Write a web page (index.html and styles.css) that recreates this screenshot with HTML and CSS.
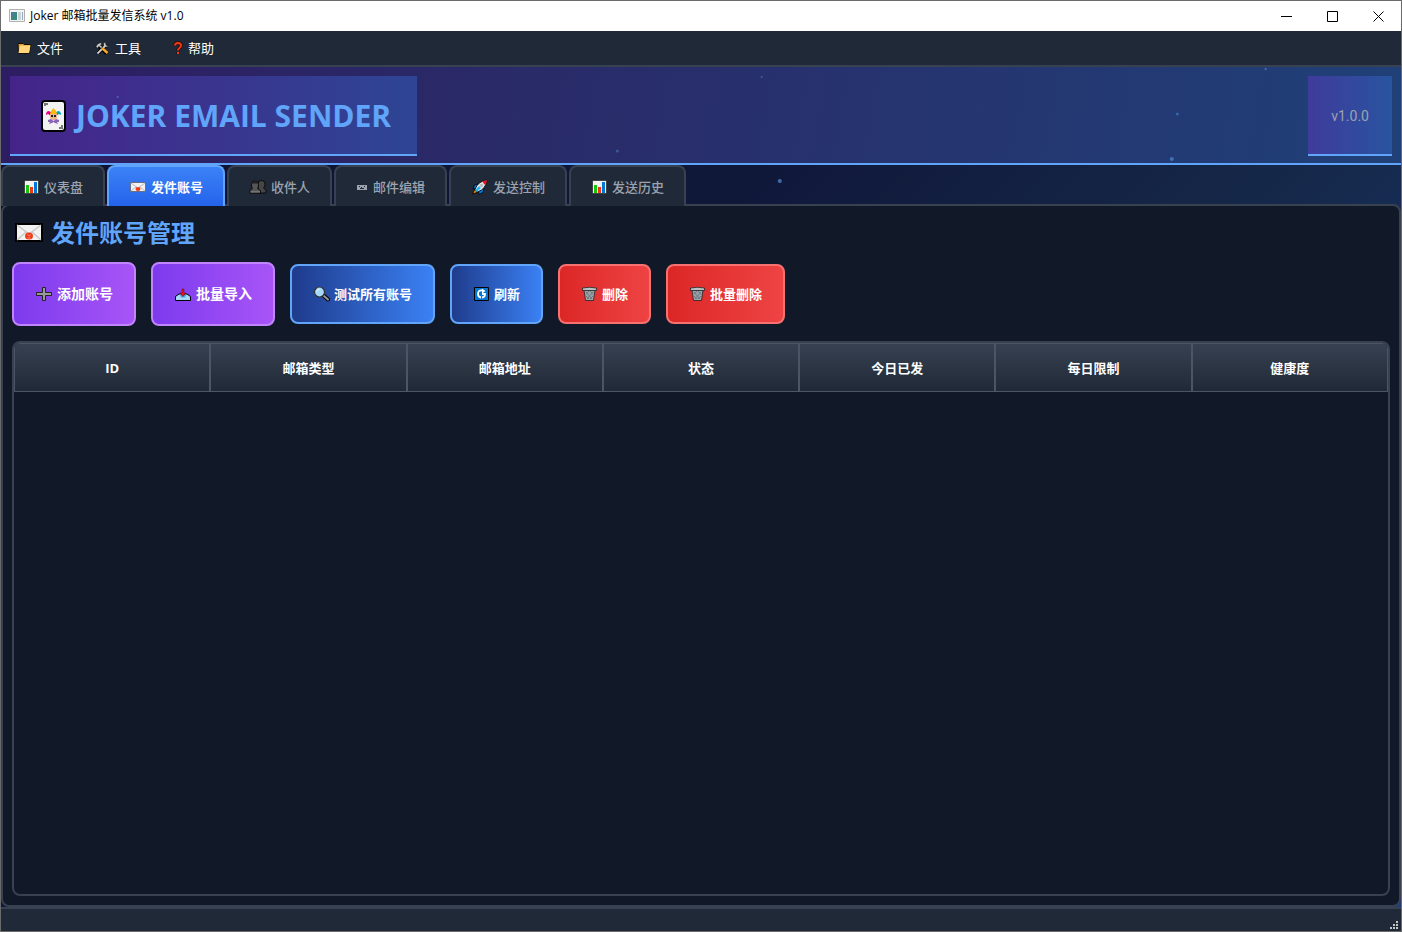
FILE: index.html
```html
<!doctype html>
<html lang="zh-CN">

<head>
  <meta charset="UTF-8" />
  <meta name="viewport" content="width=device-width, initial-scale=1.0" />
  <title>Joker 邮箱批量发信系统 v1.0</title>
  <link rel="stylesheet" href="styles.css">
</head>

<body>
  <!-- Shared icons -->
  <svg class="icon-defs" aria-hidden="true">
    <symbol id="icon-chart" viewBox="0 0 17 16">
      <path d="M1.500 1.500h14v13h-14z" fill="#f3f3f3" stroke="#111" stroke-width=".6" />
      <path d="M3 6h3v8H3z" fill="#16c60c" />
      <path d="M7 8h3v6H7z" fill="#f03a17" />
      <path d="M11 3h3v11h-3z" fill="#0078d7" />
    </symbol>
    <symbol id="icon-trash" viewBox="0 0 17 16">
      <path d="M3 4h11l-1.500 10.500h-8z" fill="#9aa5ab" stroke="#222" stroke-width=".8" />
      <path d="M5 6l6 7M9 5l3 3.500M5 10l3 3M12 6l-6 7M8 5L5 8.500M12 10l-3 3" stroke="#5d676d" stroke-width=".7" />
      <path d="M1.500 2Q8.500.5 15.500 2v2.500h-14z" fill="#b8c1c6" stroke="#222" stroke-width=".8" />
    </symbol>
  </svg>

  <div class="window">
    <header class="title-bar">
      <svg class="app-icon" viewBox="0 0 16 14" aria-hidden="true">
        <path d="M.5.5h15v12H.5z" fill="#f4f4f4" stroke="#b0b0b0" />
        <path d="M2 3h6v8H2z" fill="#3d8780" />
        <path d="M2 3h3v4H2z" fill="#4d79a8" />
        <path d="M9 3h3v8H9z" fill="#c9d2d8" />
        <path d="M13 3h1v8h-1z" fill="#9caab3" />
      </svg>
      <span class="window-title">Joker 邮箱批量发信系统 v1.0</span>
      <div class="window-controls">
        <button type="button" aria-label="最小化">
          <svg viewBox="0 0 11 11"><path d="M0 5.500h11" /></svg>
        </button>
        <button type="button" aria-label="最大化">
          <svg viewBox="0 0 11 11"><path d="M.5.5h10v10H.5z" /></svg>
        </button>
        <button type="button" aria-label="关闭">
          <svg viewBox="0 0 11 11"><path d="M.5.5l10 10M10.500.5l-10 10" /></svg>
        </button>
      </div>
    </header>

    <nav class="menu-bar">
      <button type="button">
        <svg class="icon-sm" viewBox="0 0 15 14" aria-hidden="true">
          <path d="M1 2.500h5l1 1h7L12.500 12.500h-11z" fill="#dfa036" stroke="#16110a" />
          <path d="M3 4.500h10.500l-1.500 7.500H1.500z" fill="#ffd679" />
        </svg>
        文件
      </button>
      <button type="button">
        <svg class="icon-sm" viewBox="0 0 15 14" aria-hidden="true">
          <path d="M3 12L11 4" stroke="#000" stroke-width="3.500" />
          <path d="M4 5l8 7.500" stroke="#000" stroke-width="4" />
          <path d="M9 1.500a3 3 0 0 0 1 4 3 3 0 0 0 4-1l-2 .5-1.500-1.500L11 1z" fill="#ddd" stroke="#000" stroke-width=".6" />
          <path d="M2.500 12.500L11 4" stroke="#ccc" stroke-width="1.800" />
          <path d="M7 7l5.500 5" stroke="#f7a62c" stroke-width="2.500" />
          <path d="M1 5.500Q2 2 6 1.500L7 3 5.500 4l2 2-1.500 1.500-2-2-2 2z" fill="#c5c9cc" stroke="#000" stroke-width=".6" />
        </svg>
        工具
      </button>
      <button type="button">
        <svg class="icon-q" viewBox="0 0 10 14" aria-hidden="true">
          <path d="M2 4.500Q2 2 5 2T8 4.500Q8 6 6.500 7T5 9.500M5 11v2" fill="none" stroke="#2b0904" stroke-width="3.500" />
          <path d="M2 4.500Q2 2 5 2T8 4.500Q8 6 6.500 7T5 9.500M5 11v2" fill="none" stroke="#f03a17" stroke-width="2" />
        </svg>
        帮助
      </button>
    </nav>

    <section class="banner">
      <h1 class="brand">
        <svg viewBox="0 0 28 34" aria-hidden="true">
          <rect x="2" y="2" width="23" height="30" rx="3" fill="#f2f2f2" stroke="#000" stroke-width="2" />
          <path d="M4 7V4h4v2H6v1zM23 26v4h-4v-2h2v-2z" fill="#777" />
          <path d="M6 16q0-4 3-4l3 2-1 3-3-2z" fill="#e3008c" />
          <path d="M21 16q0-4-3-4l-3 2 1 3 3-2z" fill="#00a5c8" />
          <path d="M10 15l1-3 2.500-3 2.500 3 1 3z" fill="#ffb900" />
          <path d="M10 15h7v4l-2 2h-3l-2-2z" fill="#e9b48e" />
          <path d="M11 16h2v2h-2zM14 16h2v2h-2z" fill="#222" />
          <path d="M8 21l3-1 2.500 2 2.500-2 3 1v2h-2l1 2-3-1-1.500-1-1.500 1-3 1 1-2H8z" fill="#8764b8" />
        </svg>
        JOKER EMAIL SENDER
      </h1>
      <span class="version">v1.0.0</span>
    </section>

    <div class="tab-bar" role="tablist">
      <button type="button" class="tab" role="tab">
        <svg class="icon" aria-hidden="true"><use href="#icon-chart" /></svg>仪表盘
      </button>
      <button type="button" class="tab active" role="tab" aria-selected="true">
        <svg class="icon-wide" viewBox="0 0 18 16" aria-hidden="true">
          <path d="M1.500 3.500h15v9h-15z" fill="#f2f2f2" stroke="#5a6270" stroke-width=".8" />
          <path d="M2 4l7 5 7-5M2 12l5-4M16 12l-5-4" fill="none" stroke="#bcbcbc" />
          <ellipse cx="9" cy="10" rx="2.500" ry="2" fill="#f03a17" />
        </svg>发件账号
      </button>
      <button type="button" class="tab" role="tab">
        <svg class="icon-wide" viewBox="0 0 18 16" aria-hidden="true">
          <path d="M9 5a3.500 3.500 0 0 1 7 0q0 3-1.500 4l2.500 2v3H9z" fill="#464646" stroke="#000" stroke-width=".8" />
          <path d="M2.500 5.500a3.500 3.500 0 0 1 7 0q0 3-1 4l3 2V14H1v-2.500l2.500-2q-1-1-1-4z" fill="#555" stroke="#000" stroke-width=".8" />
          <path d="M3 4.500Q4 2 6 2t3 2.500z" fill="#222" />
          <path d="M1.500 12.800h9.500" stroke="#777" stroke-width="1.500" />
        </svg>收件人
      </button>
      <button type="button" class="tab" role="tab">
        <svg class="icon-narrow" viewBox="0 0 13 16" aria-hidden="true">
          <path d="M1 6h10v5H1z" fill="#9ca3af" />
          <path d="M3 7h1v1H3zM8 7h1v1H8zM5 8h1v1H5zM4 9h4v1H4z" fill="#1f2937" />
        </svg>邮件编辑
      </button>
      <button type="button" class="tab" role="tab">
        <svg class="icon-wide" viewBox="0 0 18 16" aria-hidden="true">
          <path d="M4 10l-2.500 5L6 13.500z" fill="#ff8c00" stroke="#000" stroke-width=".8" />
          <path d="M7 5L3.500 6 2 10l4-1zM13 9.500l-1 4-4 2L7.500 11z" fill="#0078d7" stroke="#000" stroke-width=".8" />
          <path d="M4 10.500Q7 2 16 1q-1 9-9.500 12z" fill="#e6e6e6" stroke="#000" stroke-width=".8" />
          <path d="M11 2.500L16 1l-1.500 5.500z" fill="#e81224" />
          <circle cx="10.500" cy="6.500" r="1.800" fill="#b5bdc4" />
          <path d="M5 12l4-4" stroke="#29b6f0" stroke-width="2.500" />
        </svg>发送控制
      </button>
      <button type="button" class="tab" role="tab">
        <svg class="icon" aria-hidden="true"><use href="#icon-chart" /></svg>发送历史
      </button>
    </div>

    <main class="pane" role="tabpanel">
      <h2 class="page-title">
        <svg viewBox="0 0 28 20" aria-hidden="true">
          <path d="M1 1h26v17H1z" fill="#f2f2f2" stroke="#000" stroke-width="2" />
          <path d="M2 2l12 9L26 2M2 17l9-8M26 17l-9-8" fill="none" stroke="#c4c4c4" stroke-width="1.200" />
          <ellipse cx="14" cy="13" rx="4" ry="3.500" fill="#f03a17" />
          <path d="M12 11.500l2 1.500 2-1.500M12.500 15h3" fill="none" stroke="#ff9c87" stroke-width=".8" />
        </svg>
        发件账号管理
      </h2>

      <div class="toolbar">
        <button type="button" class="btn btn-accent">
          <svg class="icon-wide" viewBox="0 0 18 16" aria-hidden="true">
            <path d="M7.500 1.500h3v5h6v3h-6v5h-3v-5h-6v-3h6z" fill="#999" stroke="#222" />
          </svg>添加账号
        </button>
        <button type="button" class="btn btn-accent">
          <svg class="icon-wide" viewBox="0 0 18 16" aria-hidden="true">
            <path d="M1.500 10.500L5 8h8l3.500 2.500v4h-15z" fill="#a6d8f7" stroke="#000" />
            <path d="M6 9h6l-1 2.500H7z" fill="#4ba7e0" />
            <path d="M8 3h2v4h2l-3 3.500L6 7h2z" fill="#e81224" stroke="#501010" stroke-width=".5" />
          </svg>批量导入
        </button>
        <button type="button" class="btn btn-primary">
          <svg class="icon" viewBox="0 0 17 16" aria-hidden="true">
            <path d="M10 9l5 4.500" stroke="#000" stroke-width="4" stroke-linecap="round" />
            <path d="M11 10l4 3.500" stroke="#999" stroke-width="2" stroke-linecap="round" />
            <circle cx="6.500" cy="6" r="5" fill="#a6d8f7" stroke="#333" stroke-width="1.200" />
            <path d="M3.500 5.500q1-2.500 3-2.500" fill="none" stroke="#eefaff" />
          </svg>测试所有账号
        </button>
        <button type="button" class="btn btn-primary">
          <svg class="icon" viewBox="0 0 17 16" aria-hidden="true">
            <path d="M1.500 1.500h14v13h-14z" fill="#0078d7" stroke="#000" />
            <path d="M9 4.500Q5 4 5 8q0 3 3 3.500M9 11.500q3 0 3-3.500H9" fill="none" stroke="#fff" stroke-width="1.800" />
            <path d="M9 2.500L12.500 5 9 7.500z" fill="#fff" />
          </svg>刷新
        </button>
        <button type="button" class="btn btn-danger">
          <svg class="icon" aria-hidden="true"><use href="#icon-trash" /></svg>删除
        </button>
        <button type="button" class="btn btn-danger">
          <svg class="icon" aria-hidden="true"><use href="#icon-trash" /></svg>批量删除
        </button>
      </div>

      <div class="table-frame">
        <table class="accounts">
          <thead>
            <tr>
              <th scope="col">ID</th>
              <th scope="col">邮箱类型</th>
              <th scope="col">邮箱地址</th>
              <th scope="col">状态</th>
              <th scope="col">今日已发</th>
              <th scope="col">每日限制</th>
              <th scope="col">健康度</th>
            </tr>
          </thead>
          <tbody></tbody>
        </table>
      </div>
    </main>

    <footer class="status-bar">
      <svg viewBox="0 0 8 8" aria-hidden="true">
        <path d="M6 0h2v2H6zM3 3h2v2H3zM6 3h2v2H6zM0 6h2v2H0zM3 6h2v2H3zM6 6h2v2H6z" fill="#c4c4c4" />
      </svg>
    </footer>

    <!-- Floating particles -->
    <svg class="particles" aria-hidden="true">
      <g fill="#60a5fa">
        <circle cx="8.400%" cy="97" r="1" opacity=".5" />
        <circle cx="44.100%" cy="151" r="1.500" opacity=".35" />
        <circle cx="54.400%" cy="77" r="1" opacity=".4" />
        <circle cx="55.700%" cy="181" r="2" opacity=".6" />
        <circle cx="83.700%" cy="159" r="2" opacity=".5" />
        <circle cx="84.100%" cy="114" r="1.500" opacity=".4" />
        <circle cx="90.400%" cy="69" r="1" opacity=".6" />
      </g>
    </svg>
  </div>
</body>

</html>
```
FILE: styles.css
```css
* {
  box-sizing: border-box;
}

body {
  margin: 0;
  font-family: "Open Sans", "Noto Sans CJK SC", sans-serif;
  font-size: 13px;
  line-height: 20px;
  color: #ffffff;
  background-color: #111827;
}

button {
  margin: 0;
  padding: 0;
  border: none;
  background: none;
  color: inherit;
  font: inherit;
}

svg {
  display: block;
  flex: none;
}

.icon-defs {
  position: absolute;
  width: 0;
  height: 0;
}

.window {
  position: relative;
  display: flex;
  flex-direction: column;
  min-height: 100vh;
  border: 1px solid #6b6b6b;
  background: linear-gradient(135deg, #0f0f2a, #10183a 40%, #152646 60%, #1c407c);
}

.icon {
  width: 17px;
  height: 16px;
}

.icon-wide {
  width: 18px;
  height: 16px;
}

.icon-narrow {
  width: 13px;
  height: 16px;
}

/* Title bar */
.title-bar {
  display: flex;
  align-items: center;
  gap: 5px;
  height: 30px;
  padding-left: 8px;
  background-color: #ffffff;
  color: #000000;
  font-size: 12px;
}

.app-icon {
  width: 16px;
  height: 14px;
}

.window-controls {
  display: flex;
  align-self: stretch;
  margin-left: auto;
}

.window-controls button {
  display: flex;
  align-items: center;
  justify-content: center;
  width: 46px;
}

.window-controls svg {
  width: 11px;
  height: 11px;
  fill: none;
  stroke: #000000;
}

/* Menu */
.menu-bar {
  display: flex;
  height: 36px;
  border-bottom: 2px solid #374151;
  background-color: #1f2937;
}

.menu-bar button {
  display: flex;
  align-items: center;
  gap: 5px;
  padding: 0 16px;
}

.icon-sm {
  width: 15px;
  height: 14px;
}

.icon-q {
  width: 10px;
  height: 14px;
}

/* Banner */
.banner {
  display: flex;
  justify-content: space-between;
  padding: 9px 9px 7px;
  border-bottom: 2px solid #60a5fa;
  background: linear-gradient(100deg, #2d1d62, #2a2a68 35%, #204078);
}

.brand,
.version {
  display: flex;
  align-items: center;
  height: 80px;
  padding-top: 2px;
  border-bottom: 2px solid #60a5fa;
}

.brand {
  gap: 8px;
  margin: 0;
  padding-right: 26px;
  padding-left: 30px;
  background: linear-gradient(90deg, #45248a, #2e4594);
  color: #60a5fa;
  font-size: 30px;
  line-height: 40px;
}

.brand svg {
  width: 28px;
  height: 34px;
}

.version {
  padding-right: 23px;
  padding-left: 23px;
  background: linear-gradient(90deg, #3f3b9c, #28549f);
  color: #9ca3af;
  font-family: Roboto, sans-serif;
  font-size: 14px;
}

/* Tabs */
.tab-bar {
  position: relative;
  z-index: 1;
  display: flex;
  gap: 2px;
  margin-bottom: -2px;
}

.tab {
  display: flex;
  align-items: center;
  gap: 4px;
  height: 41px;
  padding: 0 20px;
  border: 2px solid #374151;
  border-bottom: none;
  border-radius: 8px 8px 0 0;
  background-color: #1f2937;
  color: #9ca3af;
  font-weight: 500;
}

.tab.active {
  border-color: #60a5fa;
  background: linear-gradient(#3b82f6, #2563eb);
  color: #ffffff;
  font-weight: bold;
}

/* Pane */
.pane {
  display: flex;
  flex: 1;
  flex-direction: column;
  padding: 9px;
  border: 2px solid #374151;
  border-radius: 8px;
  background-color: #111827;
}

.page-title {
  display: flex;
  align-items: center;
  gap: 8px;
  margin: 0 0 11px;
  padding-left: 3px;
  color: #60a5fa;
  font-size: 24px;
  line-height: 36px;
}

.page-title svg {
  width: 28px;
  height: 20px;
}

.toolbar {
  display: flex;
  flex-wrap: wrap;
  align-items: center;
  gap: 15px;
  margin-bottom: 15px;
}

.btn {
  display: flex;
  align-items: center;
  gap: 4px;
  height: 60px;
  padding: 0 21px;
  border: 2px solid;
  border-radius: 8px;
  background-origin: border-box;
  font-weight: bold;
}

.btn-accent {
  height: 64px;
  border-color: #c084fc;
  background-image: linear-gradient(90deg, #7c3aed, #a855f7);
  font-size: 14px;
}

.btn-primary {
  border-color: #60a5fa;
  background-image: linear-gradient(90deg, #1e3a8a, #3b82f6);
}

.btn-danger {
  border-color: #f87171;
  background-image: linear-gradient(90deg, #dc2626, #ef4444);
}

/* Accounts table */
.table-frame {
  flex: 1;
  overflow: hidden;
  border: 2px solid #374151;
  border-radius: 8px;
}

.accounts {
  width: 100%;
  border-collapse: separate;
  border-spacing: 0;
  table-layout: fixed;
}

.accounts th {
  height: 49px;
  padding: 0;
  border: 1px solid #4b5563;
  background: linear-gradient(#374151, #1f2937);
  font-weight: bold;
  text-align: center;
}

/* Status bar */
.status-bar {
  display: flex;
  align-items: flex-end;
  justify-content: flex-end;
  height: 24px;
  padding: 2px 3px;
  border-top: 2px solid #374151;
  background-color: #1f2937;
}

.status-bar svg {
  width: 8px;
  height: 8px;
}

.particles {
  position: absolute;
  inset: -1px;
  width: 100%;
  height: 200px;
  pointer-events: none;
}
```
